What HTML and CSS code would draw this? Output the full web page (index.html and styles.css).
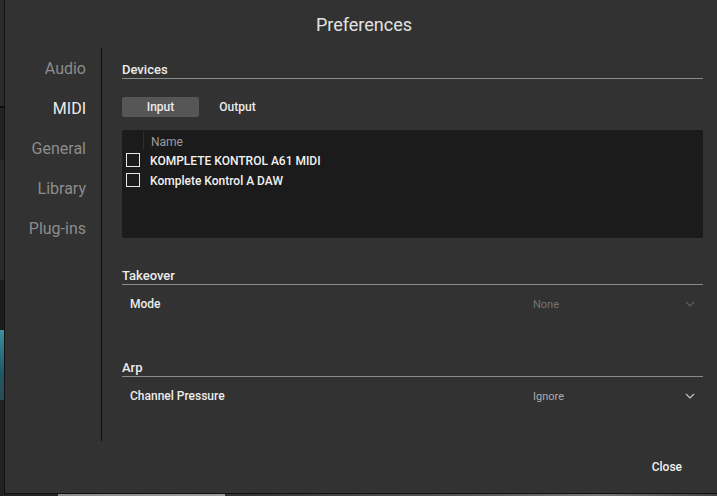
FILE: index.html
```html
<!DOCTYPE html>
<html lang="en">
<head>
    <meta charset="UTF-8">
    <title>Preferences</title>
    <link rel="stylesheet" href="styles.css">
</head>
<body>
<div class="screen">
    <div class="backdrop">
        <div class="bd bd-a"></div>
        <div class="bd bd-line"></div>
        <div class="bd bd-b"></div>
        <div class="bd bd-c"></div>
        <div class="bd bd-d"></div>
        <div class="bd bd-img"></div>
        <div class="bd bd-e"></div>
    </div>
    <div class="dialog">
        <div class="title">Preferences</div>
        <div class="main">
            <ul class="nav">
                <li>Audio</li>
                <li class="on">MIDI</li>
                <li>General</li>
                <li>Library</li>
                <li>Plug-ins</li>
            </ul>
            <div class="content">
                <h2 class="section first">Devices</h2>
                <div class="tabs">
                    <span class="tab on">Input</span>
                    <span class="tab">Output</span>
                </div>
                <div class="table">
                    <div class="thead">
                        <span class="col-check"></span>
                        <span class="col-name">Name</span>
                    </div>
                    <div class="trow">
                        <span class="col-check"><i class="box"></i></span>
                        <span class="col-name">KOMPLETE KONTROL A61 MIDI</span>
                    </div>
                    <div class="trow">
                        <span class="col-check"><i class="box"></i></span>
                        <span class="col-name">Komplete Kontrol A DAW</span>
                    </div>
                </div>

                <h2 class="section">Takeover</h2>
                <div class="row">
                    <span class="label">Mode</span>
                    <div class="select off">
                        <span>None</span>
                        <svg width="10" height="6" viewBox="0 0 10 6"><path d="M1 1 L5 5 L9 1" fill="none" stroke="currentColor" stroke-width="1.2"/></svg>
                    </div>
                </div>

                <h2 class="section arp">Arp</h2>
                <div class="row">
                    <span class="label">Channel Pressure</span>
                    <div class="select">
                        <span>Ignore</span>
                        <svg width="10" height="6" viewBox="0 0 10 6"><path d="M1 1 L5 5 L9 1" fill="none" stroke="currentColor" stroke-width="1.2"/></svg>
                    </div>
                </div>
            </div>
        </div>
        <div class="footer">
            <span class="close">Close</span>
        </div>
    </div>
</div>
<div class="bottom"></div>
</body>
</html>
```

FILE: styles.css
```css
html,body{
    height: 100%;
    overflow: hidden;
}
*{
    margin:0;
    padding:0;
    list-style: none;
    box-sizing: border-box;
}
body{
    background: #2a2a2a;
    font-family: Roboto, "Liberation Sans", sans-serif;
}
.screen{
    display: flex;
    height: 494px;
}
.backdrop{
    width: 4px;
    flex-shrink: 0;
    display: flex;
    flex-direction: column;
}
.bd-a{ height: 106px; background: #2b2b2b; }
.bd-line{ height: 2px; background: #0e0e0e; }
.bd-b{ height: 52px; background: #222; }
.bd-c{ height: 120px; background: #2a2a2a; }
.bd-d{ height: 50px; background: #1c1c1c; }
.bd-img{ height: 70px; background: linear-gradient(#3f8fa0, #1f5866 60%, #2c4b55); }
.bd-e{ flex: 1; background: #222; }

.dialog{
    width: 719px;
    flex-shrink: 0;
    background: #323232;
    border-left: 1px solid #111;
    border-bottom: 1px solid #111;
    display: flex;
    flex-direction: column;
}
.title{
    height: 48px;
    padding-top: 2px;
    line-height: 46px;
    text-align: center;
    font-size: 18px;
    color: #e2e2e2;
}
.main{
    height: 393px;
    display: flex;
}
.nav{
    width: 97px;
    flex-shrink: 0;
    border-right: 1px solid #0c0c0c;
    padding-top: 1px;
    padding-right: 15px;
    text-align: right;
}
.nav li{
    height: 40px;
    line-height: 40px;
    font-size: 16px;
    color: #8c8c8c;
}
.nav li.on{
    color: #ececec;
}
.content{
    flex: 1;
    padding: 0 20px 0 20px;
}
.section{
    height: 17px;
    line-height: 16px;
    font-size: 13px;
    font-weight: 500;
    color: #ececec;
    border-bottom: 1px solid #8a8a8a;
    margin-top: 30px;
}
.section.first{
    margin-top: 14px;
}
.section.arp{
    margin-top: 39px;
}
.tabs{
    display: flex;
    margin-top: 18px;
}
.tab{
    width: 77px;
    height: 20px;
    line-height: 21px;
    text-align: center;
    font-size: 12px;
    font-weight: 500;
    color: #ececec;
    border-radius: 2px;
}
.tab.on{
    background: #565656;
}
.table{
    margin-top: 13px;
    height: 108px;
    background: #1b1b1b;
    border-radius: 2px;
}
.thead,.trow{
    display: flex;
    align-items: center;
    height: 20px;
}
.col-check{
    width: 22px;
    height: 100%;
    display: flex;
    align-items: center;
    padding-left: 4px;
}
.thead .col-check{
    height: 18px;
    margin-top: 2px;
    border-right: 1px solid #2e2e2e;
}
.col-name{
    padding-left: 6px;
    padding-top: 1px;
    font-size: 12px;
    font-weight: 500;
    color: #f2f2f2;
}
.thead .col-name{
    padding-left: 7px;
    padding-top: 3px;
    font-weight: 400;
    color: #9c9c9c;
}
.box{
    display: block;
    width: 14px;
    height: 14px;
    border: 1px solid #e8e8e8;
}
.row{
    height: 36px;
    padding-top: 2px;
    display: flex;
    align-items: center;
    justify-content: space-between;
    padding-left: 8px;
}
.label{
    font-size: 12px;
    font-weight: 500;
    color: #ececec;
}
.select{
    width: 170px;
    display: flex;
    align-items: center;
    justify-content: space-between;
    padding-right: 8px;
    font-size: 11px;
    color: #ababab;
}
.select svg{
    color: #c4c4c4;
}
.select.off{
    color: #747474;
}
.select.off svg{
    color: #5e5e5e;
}
.footer{
    flex: 1;
    display: flex;
    align-items: center;
    justify-content: flex-end;
    padding-right: 41px;
}
.close{
    font-size: 12px;
    font-weight: 500;
    color: #f0f0f0;
}
.bottom{
    height: 2px;
    background: linear-gradient(90deg, #222 0, #222 58px, #8a8a8a 58px, #9a9a9a 225px, #333 225px, #555 470px, #777 600px, #444 717px);
}
```
